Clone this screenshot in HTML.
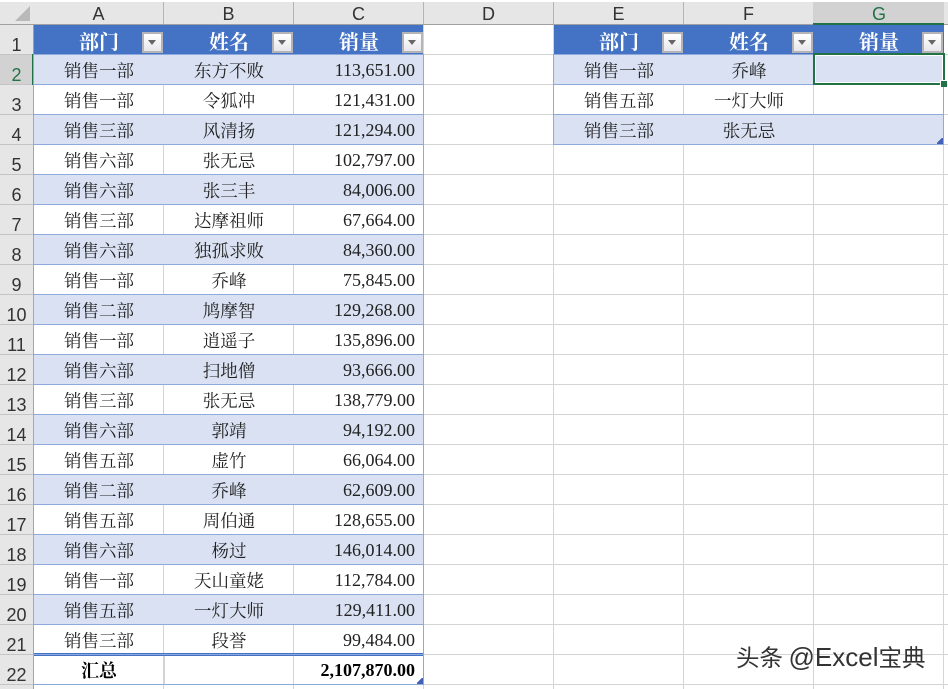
<!DOCTYPE html>
<html lang="zh">
<head>
<meta charset="utf-8">
<style>
html,body{margin:0;padding:0;width:948px;height:689px;overflow:hidden;background:#fff}
#s{position:relative;width:948px;height:689px;overflow:hidden;background-color:#fff;
font-family:"Liberation Serif","Noto Serif CJK SC",serif;color:#222;font-size:17.5px}
#g{position:absolute;left:33px;top:24px;width:915px;height:665px;
background-image:linear-gradient(to bottom,#d4d4d4 1px,transparent 1px),linear-gradient(to right,#d4d4d4 1px,transparent 1px);
background-size:130px 30px,130px 30px;background-repeat:repeat}
#ch{position:absolute;left:0;top:2px;width:948px;height:23px;background:#e6e6e6}
#chl{position:absolute;left:0;top:24px;width:948px;height:1px;background:#a0a0a0}
.c{position:absolute;top:2px;height:22px;width:129px;border-right:1px solid #b4b4b4;text-align:center;
font:18px/24px "Liberation Sans",sans-serif;color:#333;padding-left:1px;box-sizing:content-box}
#rh{position:absolute;left:0;top:25px;width:33px;height:664px;background:#e6e6e6;border-right:1px solid #a0a0a0}
.n{position:absolute;left:0;width:33px;height:29px;border-bottom:1px solid #c4c4c4;text-align:center;
font:18px/40px "Liberation Sans",sans-serif;color:#333;overflow:hidden}
.r{position:absolute;height:31px;box-sizing:border-box;border:1px solid #8ea9db}
.t1{left:33px;width:391px}
.t2{left:553px;width:391px}
.b{background:#d9e1f2}
.r span{position:absolute;top:0;width:130px;height:29px;line-height:33px;text-align:center;white-space:nowrap}
.r .x{left:0}.r .y{left:130px}
.r .z{left:260px;width:121px;text-align:right;font-size:18px;line-height:31px}
.h{position:absolute;top:25px;height:29px;background:#4472c4}
.h span{position:absolute;top:0;width:130px;text-align:center;color:#fff;font-weight:700;font-size:20px;line-height:37px;height:29px;overflow:hidden}
.f{position:absolute;top:32px;width:17px;height:17px;border:2px solid #b4b4b8;background:linear-gradient(#ffffff,#e8e8ec)}
.f:after{content:"";position:absolute;left:4px;top:6px;border-left:4.5px solid transparent;border-right:4.5px solid transparent;border-top:5px solid #666}
.q{position:absolute;width:6px;height:6px;background:linear-gradient(135deg,transparent 38%,#4461b8 38%)}
</style>
</head>
<body>
<div id="s">
<div id="g"></div>

<div id="ch"></div>
<div style="position:absolute;left:15px;top:6px;width:15px;height:15px;background:#b9b9b9;clip-path:polygon(100% 0,100% 100%,0 100%)"></div>
<div class="c" style="left:33px">A</div>
<div class="c" style="left:163px">B</div>
<div class="c" style="left:293px">C</div>
<div class="c" style="left:423px">D</div>
<div class="c" style="left:553px">E</div>
<div class="c" style="left:683px">F</div>
<div class="c" style="left:813px;width:130px;background:#d2d2d2;color:#217346;border-right:0">G</div>
<div id="chl"></div>
<div style="position:absolute;left:813px;top:23px;width:131px;height:2px;background:#217346"></div>

<div id="rh"></div>
<div class="n" style="top:25px">1</div>
<div class="n" style="top:55px;background:#d2d2d2;color:#217346">2</div>
<div class="n" style="top:85px">3</div>
<div class="n" style="top:115px">4</div>
<div class="n" style="top:145px">5</div>
<div class="n" style="top:175px">6</div>
<div class="n" style="top:205px">7</div>
<div class="n" style="top:235px">8</div>
<div class="n" style="top:265px">9</div>
<div class="n" style="top:295px">10</div>
<div class="n" style="top:325px">11</div>
<div class="n" style="top:355px">12</div>
<div class="n" style="top:385px">13</div>
<div class="n" style="top:415px">14</div>
<div class="n" style="top:445px">15</div>
<div class="n" style="top:475px">16</div>
<div class="n" style="top:505px">17</div>
<div class="n" style="top:535px">18</div>
<div class="n" style="top:565px">19</div>
<div class="n" style="top:595px">20</div>
<div class="n" style="top:625px">21</div>
<div class="n" style="top:655px">22</div>
<div style="position:absolute;left:32px;top:54px;width:2px;height:31px;background:#217346"></div>

<div class="h" style="left:34px;width:389px"><span style="left:0">部门</span><span style="left:130px">姓名</span><span style="left:260px">销量</span></div>
<div class="h" style="left:554px;width:390px"><span style="left:0">部门</span><span style="left:130px">姓名</span><span style="left:260px">销量</span></div>
<div class="f" style="left:142px"></div>
<div class="f" style="left:272px"></div>
<div class="f" style="left:402px"></div>
<div class="f" style="left:662px"></div>
<div class="f" style="left:792px"></div>
<div class="f" style="left:922px"></div>

<div class="r t1 b" style="top:54px"><span class="x">销售一部</span><span class="y">东方不败</span><span class="z">113,651.00</span></div>
<div class="r t1" style="top:84px"><span class="x">销售一部</span><span class="y">令狐冲</span><span class="z">121,431.00</span></div>
<div class="r t1 b" style="top:114px"><span class="x">销售三部</span><span class="y">风清扬</span><span class="z">121,294.00</span></div>
<div class="r t1" style="top:144px"><span class="x">销售六部</span><span class="y">张无忌</span><span class="z">102,797.00</span></div>
<div class="r t1 b" style="top:174px"><span class="x">销售六部</span><span class="y">张三丰</span><span class="z">84,006.00</span></div>
<div class="r t1" style="top:204px"><span class="x">销售三部</span><span class="y">达摩祖师</span><span class="z">67,664.00</span></div>
<div class="r t1 b" style="top:234px"><span class="x">销售六部</span><span class="y">独孤求败</span><span class="z">84,360.00</span></div>
<div class="r t1" style="top:264px"><span class="x">销售一部</span><span class="y">乔峰</span><span class="z">75,845.00</span></div>
<div class="r t1 b" style="top:294px"><span class="x">销售二部</span><span class="y">鸠摩智</span><span class="z">129,268.00</span></div>
<div class="r t1" style="top:324px"><span class="x">销售一部</span><span class="y">逍遥子</span><span class="z">135,896.00</span></div>
<div class="r t1 b" style="top:354px"><span class="x">销售六部</span><span class="y">扫地僧</span><span class="z">93,666.00</span></div>
<div class="r t1" style="top:384px"><span class="x">销售三部</span><span class="y">张无忌</span><span class="z">138,779.00</span></div>
<div class="r t1 b" style="top:414px"><span class="x">销售六部</span><span class="y">郭靖</span><span class="z">94,192.00</span></div>
<div class="r t1" style="top:444px"><span class="x">销售五部</span><span class="y">虚竹</span><span class="z">66,064.00</span></div>
<div class="r t1 b" style="top:474px"><span class="x">销售二部</span><span class="y">乔峰</span><span class="z">62,609.00</span></div>
<div class="r t1" style="top:504px"><span class="x">销售五部</span><span class="y">周伯通</span><span class="z">128,655.00</span></div>
<div class="r t1 b" style="top:534px"><span class="x">销售六部</span><span class="y">杨过</span><span class="z">146,014.00</span></div>
<div class="r t1" style="top:564px"><span class="x">销售一部</span><span class="y">天山童姥</span><span class="z">112,784.00</span></div>
<div class="r t1 b" style="top:594px"><span class="x">销售五部</span><span class="y">一灯大师</span><span class="z">129,411.00</span></div>
<div class="r t1" style="top:624px"><span class="x">销售三部</span><span class="y">段誉</span><span class="z">99,484.00</span></div>
<div class="r t1" style="top:654px;background:linear-gradient(to right,transparent 130px,#d4d4d4 130px,#d4d4d4 131px,transparent 131px)"><span class="x" style="font-weight:700;color:#000;font-size:18px">汇总</span><span class="z" style="font-weight:700;color:#000">2,107,870.00</span></div>
<div style="position:absolute;left:34px;top:653px;width:389px;height:1px;background:#4472c4"></div>
<div style="position:absolute;left:34px;top:655px;width:389px;height:1px;background:#4472c4"></div>

<div class="r t2 b" style="top:54px"><span class="x">销售一部</span><span class="y">乔峰</span></div>
<div class="r t2" style="top:84px"><span class="x">销售五部</span><span class="y">一灯大师</span></div>
<div class="r t2 b" style="top:114px"><span class="x">销售三部</span><span class="y">张无忌</span></div>

<div class="q" style="left:417px;top:678px"></div>
<div class="q" style="left:937px;top:138px"></div>

<div style="position:absolute;left:813px;top:53px;width:128px;height:28px;border:2px solid #217346;box-shadow:inset 0 0 0 1px #fff"></div>
<div style="position:absolute;left:940px;top:80px;width:6px;height:6px;background:#217346;border-left:1px solid #fff;border-top:1px solid #fff"></div>

<div style="position:absolute;left:736px;top:642px;white-space:nowrap;font:23.5px/30px 'Liberation Sans','Noto Sans CJK SC',sans-serif;color:#333;text-shadow:0 1px 0 #fff;word-spacing:-1px">头条 <span style="font-size:26px">@Excel</span>宝典</div>
</div>
</body>
</html>
